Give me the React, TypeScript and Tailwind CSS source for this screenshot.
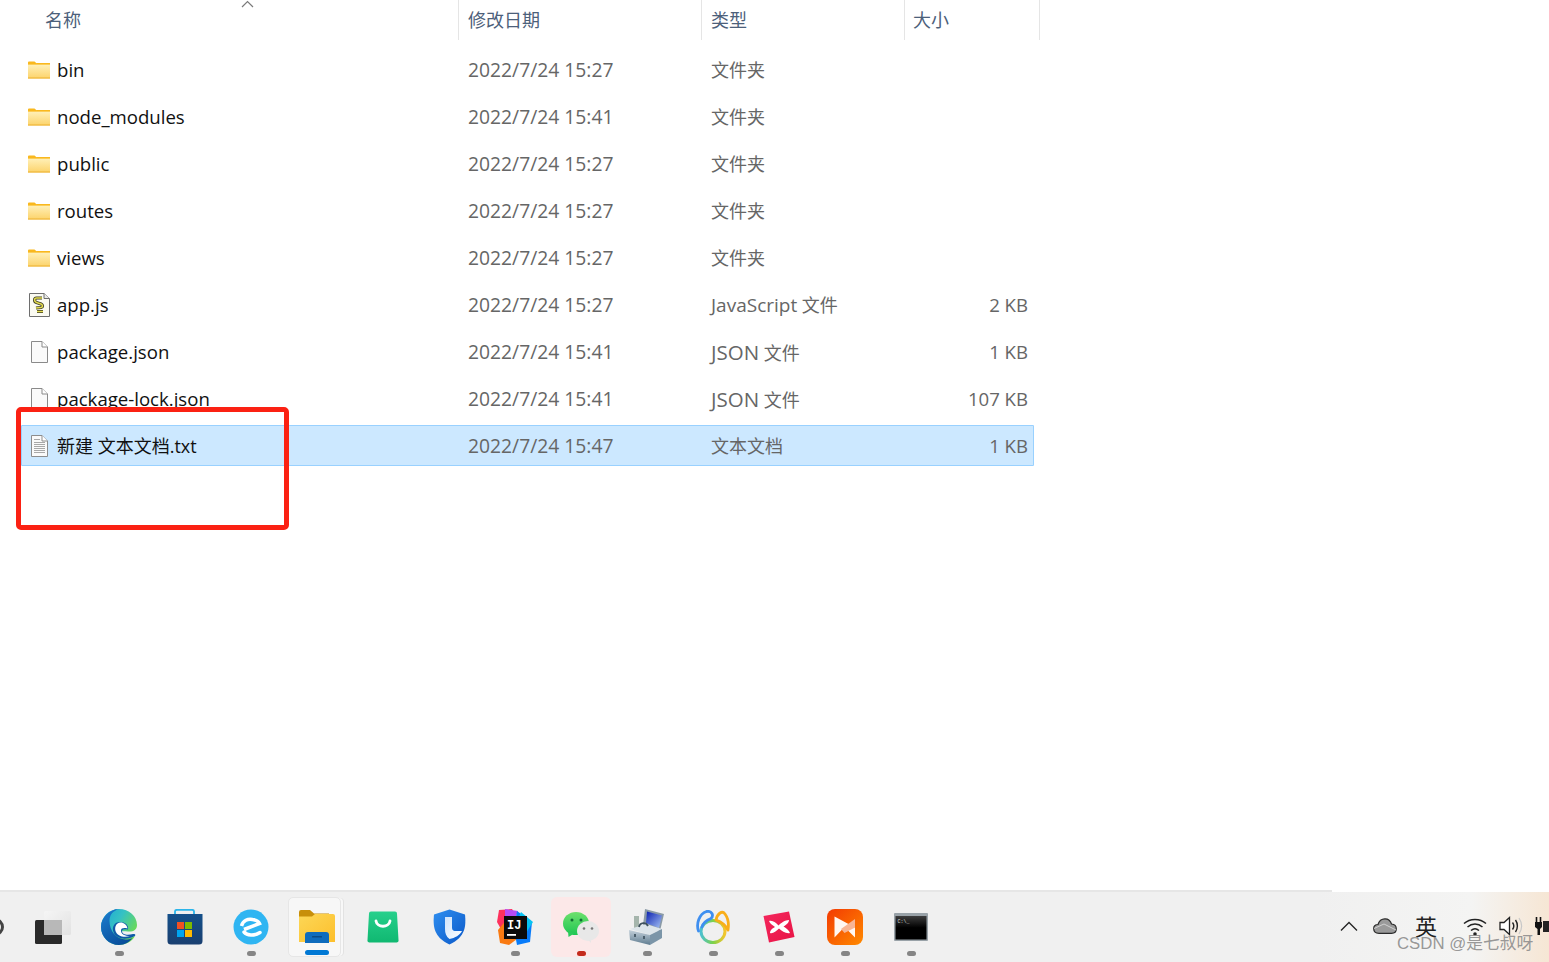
import React from "react";

const FONT = "font-['Open_Sans','Noto_Sans_CJK_SC',sans-serif]";

function Folder() {
  return (
    <svg width="22" height="18" viewBox="0 0 22 18">
      <defs>
        <linearGradient id="fg" x1="0" y1="0" x2="0" y2="1">
          <stop offset="0" stopColor="#fff0b8" />
          <stop offset="1" stopColor="#fcd36a" />
        </linearGradient>
      </defs>
      <path d="M0 1.500a1 1 0 0 1 1-1h5.500l2 1.800H22v2H0z" fill="#f9b81e" />
      <path d="M0 3.500h22V17.500H0z" fill="url(#fg)" />
      <path d="M0 16.500h22v1H0z" fill="#edb030" />
      <path d="M0 3h7.500l1.500-1h13v1.300H0z" fill="#f9b81e" />
    </svg>
  );
}

function JsFile() {
  return (
    <svg width="21" height="24" viewBox="0 0 21 24">
      <path d="M0.500 0.500H15L20.500 5.500V23.500H0.500z" fill="#fbfbf2" stroke="#6e6e6e" />
      <path d="M15 0.500V5.500H20.500" fill="#e8e8e8" stroke="#6e6e6e" />
      <path d="M13 5H7.500C5 5 5 9 7.500 9.500L12 11C14 12 14 14 12 14.500L7 15M8 18.500H14" fill="none" stroke="#3a3a20" strokeWidth="3.200" />
      <path d="M13 5H7.500C5 5 5 9 7.500 9.500L12 11C14 12 14 14 12 14.500L7 15M8 18.500H14" fill="none" stroke="#e4dc50" strokeWidth="1.600" />
    </svg>
  );
}

function BlankFile() {
  return (
    <svg width="17" height="22" viewBox="0 0 17 22">
      <path d="M0.500 0.500H11L16.500 6V21.500H0.500z" fill="#fafafa" stroke="#8a8a8a" />
      <path d="M11 0.500V6H16.500" fill="#fff" stroke="#8a8a8a" />
    </svg>
  );
}

function TextFile() {
  return (
    <svg width="17" height="22" viewBox="0 0 17 22">
      <path d="M0.500 0.500H11L16.500 6V21.500H0.500z" fill="#fafafa" stroke="#8d8d8d" />
      <path d="M11 0.500V6H16.500" fill="#fff" stroke="#8d8d8d" />
      <path d="M3 4.500H9M3 7.500H14M3 9.500H14M3 11.500H14M3 13.500H14M3 15.500H14M3 17.500H14" stroke="#a8a8a8" strokeWidth="1" />
    </svg>
  );
}

type RowData = { name: string; date: string; type: React.ReactNode; size?: string; icon: React.ReactNode; selected?: boolean };

const rows: RowData[] = [
  { name: "bin", date: "2022/7/24 15:27", type: "文件夹", icon: <Folder /> },
  { name: "node_modules", date: "2022/7/24 15:41", type: "文件夹", icon: <Folder /> },
  { name: "public", date: "2022/7/24 15:27", type: "文件夹", icon: <Folder /> },
  { name: "routes", date: "2022/7/24 15:27", type: "文件夹", icon: <Folder /> },
  { name: "views", date: "2022/7/24 15:27", type: "文件夹", icon: <Folder /> },
  { name: "app.js", date: "2022/7/24 15:27", type: <><span className="text-[19px]">JavaScript</span> 文件</>, size: "2 KB", icon: <JsFile /> },
  { name: "package.json", date: "2022/7/24 15:41", type: <><span className="text-[20.5px]">JSON</span> 文件</>, size: "1 KB", icon: <BlankFile /> },
  { name: "package-lock.json", date: "2022/7/24 15:41", type: <><span className="text-[20.5px]">JSON</span> 文件</>, size: "107 KB", icon: <BlankFile /> },
  { name: "新建 文本文档.txt", date: "2022/7/24 15:47", type: "文本文档", size: "1 KB", icon: <TextFile />, selected: true },
];

function Row({ r }: { r: RowData }) {
  return (
    <div
      className={
        "ml-[21px] w-[1013px] grid grid-cols-[447px_243px_203px_1fr] items-center text-[18px] " +
        (r.selected
          ? "h-[41px] mt-[-1px] pt-[1px] bg-[#cce8ff] rounded-[1px] outline outline-1 -outline-offset-1 outline-[#99d1ff]"
          : "h-[40px]")
      }
    >
      <div className="flex items-center h-full">
        <div className="w-[36px] flex justify-center">{r.icon}</div>
        <span className={"text-[#111111] whitespace-nowrap " + (r.selected ? "text-[18px]" : "text-[18.6px]")}>{r.name}</span>
      </div>
      <span className="text-[#666666] text-[19.3px] whitespace-nowrap">{r.date}</span>
      <span className="text-[#666666] whitespace-nowrap">{r.type}</span>
      <span className="text-[#666666] text-[18.6px] whitespace-nowrap text-right pr-[6px] col-start-4">{r.size}</span>
    </div>
  );
}

function Header() {
  const cell = "h-full border-r border-[#e5e5e5] flex items-center pt-[1px] text-[18px] text-[#4c607a] whitespace-nowrap";
  return (
    <div className="h-[40px] shrink-0 grid grid-cols-[459px_243px_203px_135px] w-[1040px]">
      <div className={cell + " pl-[45px] relative"}>
        名称
        <svg className="absolute left-[241px] top-0" width="13" height="8" viewBox="0 0 13 8">
          <path d="M1 7L6.500 1.500L12 7" fill="none" stroke="#7a7a7a" strokeWidth="1.200" />
        </svg>
      </div>
      <div className={cell + " pl-[9px]"}>修改日期</div>
      <div className={cell + " pl-[9px]"}>类型</div>
      <div className={cell + " pl-[8px]"}>大小</div>
    </div>
  );
}

function Edge() {
  return (
    <svg width="36" height="36" viewBox="0 0 36 36">
      <defs>
        <linearGradient id="e1" x1="0" y1="0" x2="1" y2="0.600">
          <stop offset="0" stopColor="#1aa6d8" />
          <stop offset="0.500" stopColor="#35c1c4" />
          <stop offset="1" stopColor="#6fdc4f" />
        </linearGradient>
        <linearGradient id="e2" x1="0" y1="0" x2="0.600" y2="1">
          <stop offset="0" stopColor="#1d7fd0" />
          <stop offset="1" stopColor="#0a4f9c" />
        </linearGradient>
      </defs>
      <path d="M18 0C28 0 36 7 36 16C36 21 32 23 27 22.500C22 22 17 22 17.500 24C19 29 28 30 34 27C31 32.500 25 36 18 36C8 36 0 28 0 18C0 8 8 0 18 0Z" fill="url(#e1)" />
      <path d="M0 18C0 8 9 0 18 0C11.500 2 8.500 6 8.500 12C8.500 24 19 34.500 31.500 29C28.500 33 24 36 18 36C8 36 0 28 0 18Z" fill="url(#e2)" />
      <path d="M19 13C13.500 13 10.500 18 12.500 23C14.500 29 23 32 33 27.500C35.500 26 34 24.500 32 25C27 26.500 21 26 21 22C21 20 24 20 27 20.500C28 16 24 13 19 13Z" fill="#0f5aa8" />
      <path d="M19.500 13.500C15 14 13.500 18 14.500 22C16 27 23 29 29 27C24 27 20 25.500 20 21.500C20 19 23 18.500 26.500 19.500C26 16 23 13.500 19.500 13.500Z" fill="#fff" />
    </svg>
  );
}

function Store() {
  return (
    <svg width="36" height="36" viewBox="0 0 36 36">
      <defs>
        <linearGradient id="s1" x1="0" y1="0" x2="0" y2="1">
          <stop offset="0" stopColor="#14508a" />
          <stop offset="1" stopColor="#1a3f70" />
        </linearGradient>
      </defs>
      <path d="M8 7V2.500C8 1.500 9 0.800 10 0.800H25C26 0.800 27 1.500 27 2.500V7" fill="none" stroke="#2bb5ea" strokeWidth="1.800" />
      <path d="M0.500 5H35.500V32a3.500 3.500 0 0 1-3.500 3.500H4A3.500 3.500 0 0 1 0.500 32z" fill="url(#s1)" />
      <rect x="10" y="13" width="7" height="7" fill="#f25022" />
      <rect x="18" y="13" width="7" height="7" fill="#7fba00" />
      <rect x="10" y="21" width="7" height="7" fill="#00a4ef" />
      <rect x="18" y="21" width="7" height="7" fill="#ffb900" />
    </svg>
  );
}

function Browser2345() {
  return (
    <svg width="36" height="36" viewBox="0 0 36 36">
      <circle cx="18" cy="18" r="17.500" fill="#2fb5f2" />
      <path d="M8.500 17C10 11.500 15 9.500 19.500 10.500C23 11 25.500 12.500 26.500 14.500L11 20.500" fill="none" stroke="#fff" strokeWidth="3.500" />
      <path d="M11 23C14 26.500 21 27.500 27 23.500" fill="none" stroke="#fff" strokeWidth="3.500" strokeLinecap="round" />
    </svg>
  );
}

function Files() {
  return (
    <svg width="36" height="35" viewBox="0 0 36 35">
      <defs>
        <linearGradient id="f1" x1="0" y1="0" x2="1" y2="1">
          <stop offset="0" stopColor="#fcd757" />
          <stop offset="1" stopColor="#fdbf2c" />
        </linearGradient>
      </defs>
      <path d="M0 2a2 2 0 0 1 2-2H11L15 3.500H30V9H0z" fill="#c88f0a" />
      <path d="M0 6.500H13L16 4H34a2 2 0 0 1 2 2V32H0z" fill="url(#f1)" />
      <path d="M6 25a3 3 0 0 1 3-3H27a3 3 0 0 1 3 3V33H6z" fill="#0f6cbd" />
      <rect x="13" y="26" width="10" height="1.500" rx="0.500" fill="#0b4a85" />
    </svg>
  );
}

function GreenBag() {
  return (
    <svg width="32" height="32" viewBox="0 0 32 32">
      <defs>
        <linearGradient id="g1" x1="0" y1="0" x2="0" y2="1">
          <stop offset="0" stopColor="#27d08c" />
          <stop offset="1" stopColor="#10b871" />
        </linearGradient>
      </defs>
      <path d="M2 2.500A2 2 0 0 1 4 0.500H28A2 2 0 0 1 30 2.500L31.500 29A2 2 0 0 1 29.500 31.500H2.500A2 2 0 0 1 0.500 29z" fill="url(#g1)" />
      <path d="M9 10C10 17 22 17 23 10" fill="none" stroke="#fff" strokeWidth="2.800" strokeLinecap="round" />
    </svg>
  );
}

function Shield() {
  return (
    <svg width="33" height="36" viewBox="0 0 33 36">
      <defs>
        <linearGradient id="sh1" x1="0" y1="0" x2="1" y2="1">
          <stop offset="0" stopColor="#2f8ff0" />
          <stop offset="1" stopColor="#0b58c8" />
        </linearGradient>
        <linearGradient id="sh2" x1="0" y1="0" x2="1" y2="1">
          <stop offset="0" stopColor="#cfe3fb" />
          <stop offset="1" stopColor="#ffffff" />
        </linearGradient>
      </defs>
      <path d="M16.500 0.500L32 5.500C33 16 33 28 16.500 35.500C0 28 0 16 1 5.500z" fill="url(#sh1)" />
      <path d="M12 8H19V19C19 21.500 21 22 23 22H29C27 26 22 29 16.500 30C13 27.500 12 24 12 20z" fill="url(#sh2)" />
    </svg>
  );
}

function Idea() {
  return (
    <svg width="36" height="36" viewBox="0 0 36 36">
      <path d="M2 1L15 0L20 8L5 22L0 13z" fill="#fe315d" />
      <path d="M1 21L10 10L20 30L12 36L3 34z" fill="#f97a12" />
      <path d="M8 0L21 2L18 10L8 9z" fill="#b74af7" />
      <path d="M20 2L35 13L33 33L20 36L17 20z" fill="#087cfa" />
      <path d="M24 3L36 13L29 24L20 12z" fill="#07c3f2" />
      <rect x="7" y="7" width="23" height="23" fill="#0b0b0b" />
      <text x="10" y="19.500" fill="#fff" fontSize="12" fontWeight="700" fontFamily="'Liberation Mono',monospace">IJ</text>
      <rect x="10" y="25" width="9" height="1.800" fill="#fff" />
    </svg>
  );
}

function WeChat() {
  return (
    <svg width="36" height="31" viewBox="0 0 36 31">
      <defs>
        <linearGradient id="w1" x1="0" y1="0" x2="0" y2="1">
          <stop offset="0" stopColor="#6ee06d" />
          <stop offset="1" stopColor="#1fc653" />
        </linearGradient>
      </defs>
      <ellipse cx="13" cy="11.500" rx="13" ry="11.500" fill="url(#w1)" />
      <path d="M5 19L5.500 25L12 21z" fill="#2bc95a" />
      <circle cx="9" cy="8" r="1.500" fill="#0f6d33" />
      <circle cx="18" cy="8" r="1.500" fill="#0f6d33" />
      <path d="M28 31L27.500 27L22 24z" fill="#e4e4e4" />
      <ellipse cx="25" cy="19" rx="11" ry="10" fill="#e8e8e8" />
      <circle cx="21" cy="16.500" r="1.300" fill="#777" />
      <circle cx="29" cy="16.500" r="1.300" fill="#777" />
    </svg>
  );
}

function Toolbox() {
  return (
    <svg width="36" height="36" viewBox="0 0 36 36">
      <defs>
        <linearGradient id="t1" x1="0" y1="0" x2="0" y2="1">
          <stop offset="0" stopColor="#c3d0da" />
          <stop offset="1" stopColor="#5f7c90" />
        </linearGradient>
        <linearGradient id="t2" x1="0" y1="0" x2="1" y2="1">
          <stop offset="0" stopColor="#0a1fb0" />
          <stop offset="1" stopColor="#a6c4f5" />
        </linearGradient>
      </defs>
      <path d="M16 0L35 5L31 22L14 16z" fill="#8a9aa6" />
      <path d="M18 2.500L33 6.500L30 19L17 14z" fill="url(#t2)" />
      <path d="M5 7H10V20H5z" fill="#a5b5ac" />
      <path d="M1 20L17 15L33 20L21 26z" fill="#dde5ea" />
      <path d="M0 21L21 26V36L1 31z" fill="url(#t1)" />
      <path d="M21 26L33 20V29L21 36z" fill="#7b95a8" />
      <path d="M10 18C11 13 17 13 19 17" fill="none" stroke="#3f525e" strokeWidth="1.800" />
      <rect x="5" y="25" width="2" height="3" fill="#4b5f6c" />
      <rect x="14" y="27" width="2" height="3" fill="#4b5f6c" />
    </svg>
  );
}

function Navicat() {
  return (
    <svg width="34" height="34" viewBox="0 0 34 34">
      <defs>
        <linearGradient id="n1" x1="0" y1="0" x2="1" y2="0">
          <stop offset="0" stopColor="#4bc0d0" />
          <stop offset="0.500" stopColor="#7cd24a" />
          <stop offset="1" stopColor="#f5c52c" />
        </linearGradient>
      </defs>
      <ellipse cx="17" cy="21.500" rx="12" ry="11" fill="none" stroke="url(#n1)" strokeWidth="3" />
      <path d="M2.500 21C0 14 3 4 10.500 1.500C16 0.500 18 5.500 15 8.500C11 10 7 13 6 17" fill="none" stroke="#3f8ff0" strokeWidth="2.800" strokeLinecap="round" />
      <path d="M20 10C21 4 26 0 29 4C32 8 33 14 32 20C30 16 26 12 20 10Z" fill="none" stroke="#f9ae19" strokeWidth="2.800" strokeLinejoin="round" />
    </svg>
  );
}

function XMind() {
  return (
    <svg width="32" height="32" viewBox="0 0 32 32">
      <defs>
        <linearGradient id="x1" x1="0" y1="0" x2="1" y2="1">
          <stop offset="0" stopColor="#f4275d" />
          <stop offset="1" stopColor="#e81445" />
        </linearGradient>
      </defs>
      <path d="M0.500 5L26 0.500L31.500 26L6 31.500z" fill="url(#x1)" />
      <path d="M6 10C10 9 13 12 15.500 14.500C18 12 22 9 26 9C26 12 23 14 20.500 15.500C23 17 26 19 27 22C23 23 19 20 16 17.500C13 20 10 23 7 22C7 19 10 17 12 16C10 14 7 13 6 10Z" fill="#fff" />
    </svg>
  );
}

function Bowtie() {
  return (
    <svg width="36" height="36" viewBox="0 0 36 36">
      <defs>
        <linearGradient id="b1" x1="0" y1="0" x2="1" y2="1">
          <stop offset="0" stopColor="#f33a02" />
          <stop offset="1" stopColor="#ff8a00" />
        </linearGradient>
      </defs>
      <rect width="36" height="36" rx="8" fill="url(#b1)" />
      <path d="M7.500 7.500L28 18.500V28.500L17.500 18L7.500 28.500z" fill="#fff" opacity="0.950" />
      <path d="M14 20L28 10V18.500L17.500 24z" fill="#f8b594" />
    </svg>
  );
}

function Cmd() {
  return (
    <svg width="34" height="28" viewBox="0 0 34 28">
      <defs>
        <linearGradient id="c1" x1="0" y1="0" x2="0" y2="1">
          <stop offset="0" stopColor="#3c3c3c" />
          <stop offset="0.500" stopColor="#000" />
        </linearGradient>
      </defs>
      <rect width="34" height="28" rx="1" fill="#99a2a8" />
      <rect x="1.500" y="3" width="31" height="23.500" fill="url(#c1)" />
      <text x="3.500" y="9.500" fontSize="5" fill="#ddd" fontFamily="'Liberation Mono',monospace">C:\_</text>
    </svg>
  );
}

function TaskView() {
  return (
    <svg width="36" height="34" viewBox="0 0 36 34">
      <defs>
        <linearGradient id="tv" x1="0" y1="0" x2="1" y2="1">
          <stop offset="0" stopColor="#f5f5f5" />
          <stop offset="1" stopColor="#e2e2e2" />
        </linearGradient>
      </defs>
      <rect x="0" y="10" width="27" height="24" rx="1.500" fill="#2a2a2a" />
      <rect x="9" y="1" width="27" height="24" rx="1.500" fill="url(#tv)" />
      <rect x="9" y="10" width="18" height="15" fill="#b8b8b8" />
    </svg>
  );
}

type Item = { icon: React.ReactNode; pip?: "gray" | "red" | "blue"; box?: "files" | "wechat" };

const items: Item[] = [
  { icon: <TaskView /> },
  { icon: <Edge />, pip: "gray" },
  { icon: <Store /> },
  { icon: <Browser2345 />, pip: "gray" },
  { icon: <Files />, pip: "blue", box: "files" },
  { icon: <GreenBag /> },
  { icon: <Shield /> },
  { icon: <Idea />, pip: "gray" },
  { icon: <WeChat />, pip: "red", box: "wechat" },
  { icon: <Toolbox />, pip: "gray" },
  { icon: <Navicat />, pip: "gray" },
  { icon: <XMind />, pip: "gray" },
  { icon: <Bowtie />, pip: "gray" },
  { icon: <Cmd />, pip: "gray" },
];

function TaskItem({ it }: { it: Item }) {
  const box =
    it.box === "files"
      ? "w-[53px] mr-[5px] pl-[5px] bg-[#f7f7f7] rounded-[5px] border border-[#e6e6e6] shadow-[3px_0_0_-1px_#f8f8f8,4px_0_0_-1px_#e2e2e2]"
      : it.box === "wechat"
        ? "w-[60px] bg-[#fce8e8] rounded-[6px]"
        : "w-[60px]";
  const pip =
    it.pip === "blue"
      ? "w-[24px] bg-[#0078d4] left-[16px]"
      : it.pip === "red"
        ? "w-[9px] bg-[#c42b1c]"
        : it.pip === "gray"
          ? "w-[9px] bg-[#858585]"
          : "";
  return (
    <div className="w-[66px] shrink-0 flex justify-center">
      <div className={"h-[60px] relative flex items-center justify-center " + box}>
        {it.icon}
        {it.pip && <div className={"absolute bottom-[1px] h-[5px] rounded-full " + pip} />}
      </div>
    </div>
  );
}

function Taskbar() {
  return (
    <div className="relative h-[72px] shrink-0 flex items-start bg-gradient-to-r from-[#f0f0f0] from-85% via-[#f4f4f3] via-95% to-[#f6e6d4] border-t-2 border-[#e6e6e6]">
      <div className="w-[20px] shrink-0 h-full overflow-hidden relative">
        <div className="absolute left-[-14px] top-[26px] w-[18px] h-[18px] rounded-full border-[3px] border-[#444444]" />
      </div>
      <div className="flex items-start pt-[5px]">
        {items.map((it, i) => (
          <TaskItem key={i} it={it} />
        ))}
      </div>
      <div className="flex-1 flex justify-end items-center h-[70px] pb-[2px]">
        <svg width="18" height="10" viewBox="0 0 18 10" className="mr-[15px]">
          <path d="M1 9.500L9 1.500L17 9.500" fill="none" stroke="#222" strokeWidth="1.300" />
        </svg>
        <svg width="24" height="16" viewBox="0 0 24 16" className="mr-[18px]">
          <path d="M6 15.300C2.500 15.300 0.700 13 0.700 10.500C0.700 8 2.500 6.500 5 6.500C6 3 8.500 0.800 12 0.800C15 0.800 17.500 2.500 18.500 6C21.500 6.300 23.300 8.300 23.300 10.700C23.300 13.300 21.500 15.300 18.500 15.300z" fill="#9a9a9a" stroke="#2b2b2b" strokeWidth="1.200" />
          <path d="M1 10.500L11 6L23 12" fill="none" stroke="#d0d0d0" strokeWidth="1" />
        </svg>
        <span className="text-[22px] leading-none text-[#222] mr-[26px]">英</span>
        <svg width="24" height="19" viewBox="0 0 24 19" className="mr-[12px]">
          <path d="M1 6.500C7 1 17 1 23 6.500M4.500 10C9 6 15 6 19.500 10M8 13.500C10.500 11.300 13.500 11.300 16 13.500" fill="none" stroke="#222" strokeWidth="1.500" />
          <circle cx="12" cy="17" r="1.800" fill="#222" />
        </svg>
        <svg width="24" height="20" viewBox="0 0 24 20" className="mr-[12px]">
          <path d="M1 6.500H5L10.500 1.500V18.500L5 13.500H1z" fill="#fff" stroke="#222" strokeWidth="1.300" />
          <path d="M13.500 6.500C15 8.500 15 11.500 13.500 13.500M16.500 4C19 7.500 19 12.500 16.500 16" fill="none" stroke="#222" strokeWidth="1.400" />
          <path d="M20 2C23.300 7 23.300 13 20 18" fill="none" stroke="#c8c8c8" strokeWidth="1.200" />
        </svg>
        <svg width="14" height="18" viewBox="0 0 14 18" className="shrink-0">
          <path d="M1.500 0V5M5.500 0V5" stroke="#111" strokeWidth="1.600" />
          <path d="M0 5H7V10L5 12V18H2.500V12L0 10z" fill="#111" />
          <path d="M8 4H14V15H8z" fill="#222" />
        </svg>
      </div>
      <span className="absolute left-[1397px] top-[41px] text-[16.800px] leading-[22px] text-[#8c8c8c]/90 whitespace-nowrap font-['Liberation_Sans','Noto_Sans_CJK_SC',sans-serif]">
        CSDN @是七叔呀
      </span>
      <div className="absolute left-[1332px] right-0 top-[-2px] h-[2px] bg-white" />
    </div>
  );
}

export default function App() {
  return (
    <div className={"relative w-[1549px] h-[962px] overflow-hidden bg-white flex flex-col " + FONT}>
      <Header />
      <div className="flex-1 flex flex-col gap-[7px] pt-[10px]">
        {rows.map((r) => (
          <Row key={r.name} r={r} />
        ))}
      </div>
      <Taskbar />
      <div className="absolute left-[16px] top-[407px] w-[273px] h-[123px] rounded-[5px] border-[5px] border-[#fb2113]">
        <div className="h-[13px] bg-white" />
      </div>
    </div>
  );
}
